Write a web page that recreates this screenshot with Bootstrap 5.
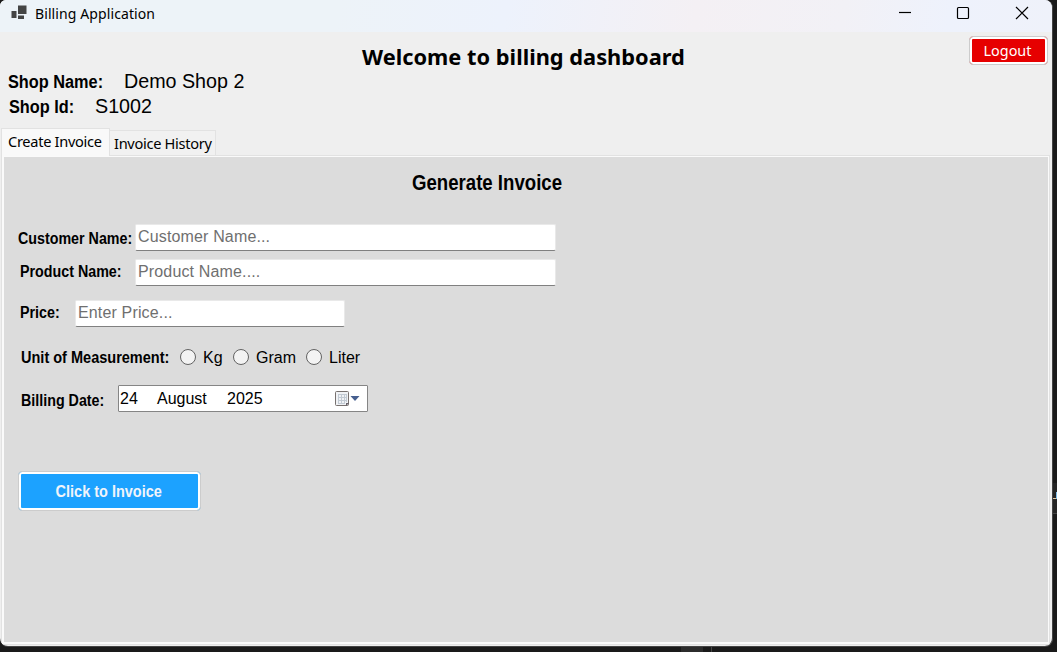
<!DOCTYPE html>
<html lang="en">
<head>
<meta charset="utf-8">
<title>Billing Application</title>
<meta name="viewport" content="width=device-width, initial-scale=1">
<link rel="stylesheet" href="https://cdn.jsdelivr.net/npm/bootstrap@5.3.0/dist/css/bootstrap.min.css">
<style>
  body { height: 652px; background: #1a1a1a; font-family: "Liberation Sans", Arial, sans-serif; font-size: 16px; line-height: 20px; color: #000; }
  .desk { width: 1057px; height: 652px; }
  .app-window { width: 1053px; height: 646px; background: #efefef; border-right: 1px solid #444; border-radius: 6px 8px 8px 8px; box-shadow: 0 1px 0 #444; }
  .title-bar { height: 32px; background: linear-gradient(100deg, #edf3f8 0%, #edf3f8 32%, #edf2fc 48%, #f4f0f4 66%, #f2f1f6 80%, #eef2fc 90%, #eff2fa 100%); padding-left: 11px; }
  .ui-face { font-family: "Noto Sans", "Open Sans", sans-serif; }
  .app-name { font-size: 14px; letter-spacing: .1px; margin: -4px 0 0 8px; }
  .top-area { height: 96px; }
  .welcome { font-size: 21.8px; font-weight: 700; line-height: 30px; width: 340px; margin: 10px 0 0 362px; letter-spacing: .01px; }
  .log-btn { width: 79px; height: 29px; margin: 4px 4px 0 0; padding: 0 2px 0 0; border: 1px solid #ccc; border-radius: 4px; background: #e60000; box-shadow: inset 0 0 0 2px #fff; color: #fff; font-size: 14.4px; line-height: 26px; }
  .shop-line { height: 25px; line-height: 25px; }
  .squeeze { display: inline-block; font-weight: 700; transform-origin: left center; }
  .shop-line .lab { line-height: 25px; }
  .shop-line .val { font-size: 19.7px; }
  .tab-strip { height: 27px; padding-left: 1px; font-size: 14.6px; letter-spacing: -.3px; }
  .tab-strip .nav-link { color: #000; padding: 0; border: 1px solid #e2e2e2; border-radius: 0; line-height: 24px; }
  .tab-strip .tab-on { width: 109px; height: 28px; background: #f9f9f9; border-bottom: 0; padding-left: 6px; }
  .tab-strip .tab-off { width: 106px; height: 26px; margin-top: 2px; background: #f1f1f1; border-left: 0; padding-left: 4px; }
  .pane { height: 490px; margin: 0 2px 0 1px; border: 1px solid #e2e2e2; background: #dcdcdc; box-shadow: inset 2px 1px 0 #fafafa, inset -1px -2px 0 #fafafa; padding: 0 0 0 2px; }
  .form-head { font-size: 21.3px; line-height: 26px; padding: 14px 0 0 408px; height: 68px; }
  .form-head .squeeze { transform: scaleX(.874); }
  .entry { height: 27px; }
  .lab { flex: none; white-space: nowrap; line-height: 27px; }
  .lab .squeeze { font-size: 16px; transform: scaleX(.892); }
  .lab .squeeze-less { transform: scaleX(.907); }
  .shop-line .lab .squeeze { font-size: 18.7px; transform: scaleX(.872); }
  .lab-low { padding-top: 1px; }
  .lab-high { line-height: 25px; }
  .box { height: 27px; padding: 0 0 2px 2px; border: 1px solid #e9e9e9; border-bottom-color: #808080; border-radius: 2px; background: #fff; color: #6f6f6f; line-height: 22px; font-size: 16px; letter-spacing: .15px; }
  .box::placeholder { color: #6f6f6f; opacity: 1; }
  .ring { width: 16px; height: 16px; border: 1px solid #626262; border-radius: 50%; background: #f3f3f3; margin-top: -1px; }
  .date-box { width: 250px; height: 27px; border: 1px solid #858585; border-radius: 1px; background: #fff; padding-left: 1px; line-height: 25px; }
  .go-btn { width: 183px; height: 40px; padding: 0 2px 0 0; border: 1px solid #ccc; border-radius: 4px; background: #1ca2ff; box-shadow: inset 0 0 0 2px #fff; color: #f0f4fa; }
  .go-btn .squeeze { transform: scaleX(.905); transform-origin: center; padding-top: 2px; }
  .under-bar { left: 681px; top: 647px; width: 22px; height: 5px; background: #2c2c2c; }
  .under-line { left: 711px; top: 647px; width: 1px; height: 5px; background: #444; }
  .behind { left: 1053px; top: 483px; width: 4px; height: 31px; background: #252525; border-bottom: 1px solid #444; overflow: hidden; }
  .behind i { display: block; width: 3px; height: 1px; margin-top: 15px; background: #e4c9a0; }
  .behind b { display: block; width: 1px; height: 7px; margin: -7px 0 0 3px; background: #80bde8; }
</style>
</head>
<body>
<div class="desk position-relative overflow-hidden">
  <main class="app-window overflow-hidden">
    <header class="title-bar d-flex align-items-start">
      <svg width="16" height="15" viewBox="0 0 16 15" style="margin-top:5px" fill="#444">
        <rect x="7" y=".5" width="8.500" height="8.500"/><rect x=".5" y="6" width="5" height="7"/><rect x="7" y="10.500" width="6" height="3.500"/>
      </svg>
      <span class="app-name ui-face align-self-center">Billing Application</span>
      <svg class="ms-auto" width="158" height="30" viewBox="0 0 158 30" fill="none" stroke="#000" stroke-width="1.200">
        <path d="M5 12.500h12"/><rect x="63.500" y="7.500" width="11" height="11" rx="1"/><path d="M122 7l12 12M134 7l-12 12"/>
      </svg>
    </header>
    <section class="top-area">
      <div class="d-flex justify-content-between" style="height:37px">
        <h1 class="welcome ui-face text-nowrap mb-0">Welcome to billing dashboard</h1>
        <button class="log-btn ui-face" type="button">Logout</button>
      </div>
      <div class="shop-line d-flex"><span class="lab ps-2" style="width:124px"><span class="squeeze">Shop Name:</span></span><span class="val">Demo Shop 2</span></div>
      <div class="shop-line d-flex"><span class="lab" style="width:95px;padding-left:9px"><span class="squeeze">Shop Id:</span></span><span class="val">S1002</span></div>
    </section>
    <nav class="nav tab-strip ui-face flex-nowrap">
      <a class="nav-link tab-on text-nowrap">Create Invoice</a>
      <a class="nav-link tab-off text-nowrap">Invoice History</a>
    </nav>
    <form class="pane">
      <div class="form-head"><span class="squeeze">Generate Invoice</span></div>
      <div class="entry d-flex"><label class="lab lab-low" style="width:131px;padding-left:14px"><span class="squeeze">Customer Name:</span></label><input class="box" style="width:421px" placeholder="Customer Name..."></div>
      <div class="entry d-flex" style="margin-top:8px"><label class="lab lab-high" style="width:131px;padding-left:16px"><span class="squeeze">Product Name:</span></label><input class="box" style="width:421px" placeholder="Product Name...."></div>
      <div class="entry d-flex" style="margin-top:14px"><label class="lab lab-high" style="width:71px;padding-left:16px"><span class="squeeze">Price:</span></label><input class="box" style="width:270px" placeholder="Enter Price..."></div>
      <div class="entry d-flex align-items-center" style="margin-top:17px">
        <span class="lab" style="width:176px;padding-left:17px"><span class="squeeze squeeze-less">Unit of Measurement:</span></span>
        <span class="ring"></span><span style="width:37px;padding-left:7px">Kg</span>
        <span class="ring"></span><span style="width:57px;padding-left:7px">Gram</span>
        <span class="ring"></span><span style="padding-left:7px">Liter</span>
      </div>
      <div class="entry d-flex" style="margin-top:14px">
        <span class="lab" style="width:114px;padding:2px 0 0 17px"><span class="squeeze">Billing Date:</span></span>
        <div class="date-box d-flex"><span style="width:37px">24</span><span style="width:70px">August</span><span>2025</span>
          <svg class="ms-auto" width="33" height="25" viewBox="0 0 33 25">
            <rect x="1.500" y="5.500" width="13" height="14" rx="1" fill="#f0f2f5" stroke="#77716f"/><path d="M4 8.500h9M4 11.500h9M4 14.500h9M4 17.500h7M4.500 8v9M7.500 8v9M10.500 8v9M12.500 8v8" stroke="#c2cad3" fill="none"/><path d="M12 20v-3h3z" fill="#68636b"/>
            <path d="M16.500 10h9l-4.500 5z" fill="#465f8f"/>
          </svg>
        </div>
      </div>
      <div style="padding:59px 0 0 14px"><button class="go-btn" type="button"><span class="squeeze">Click to Invoice</span></button></div>
    </form>
  </main>
  <div class="under-bar position-absolute"></div><div class="under-line position-absolute"></div>
  <div class="behind position-absolute"><i></i><b></b></div>
</div>
<script src="https://cdn.jsdelivr.net/npm/bootstrap@5.3.0/dist/js/bootstrap.bundle.min.js"></script>
</body>
</html>
